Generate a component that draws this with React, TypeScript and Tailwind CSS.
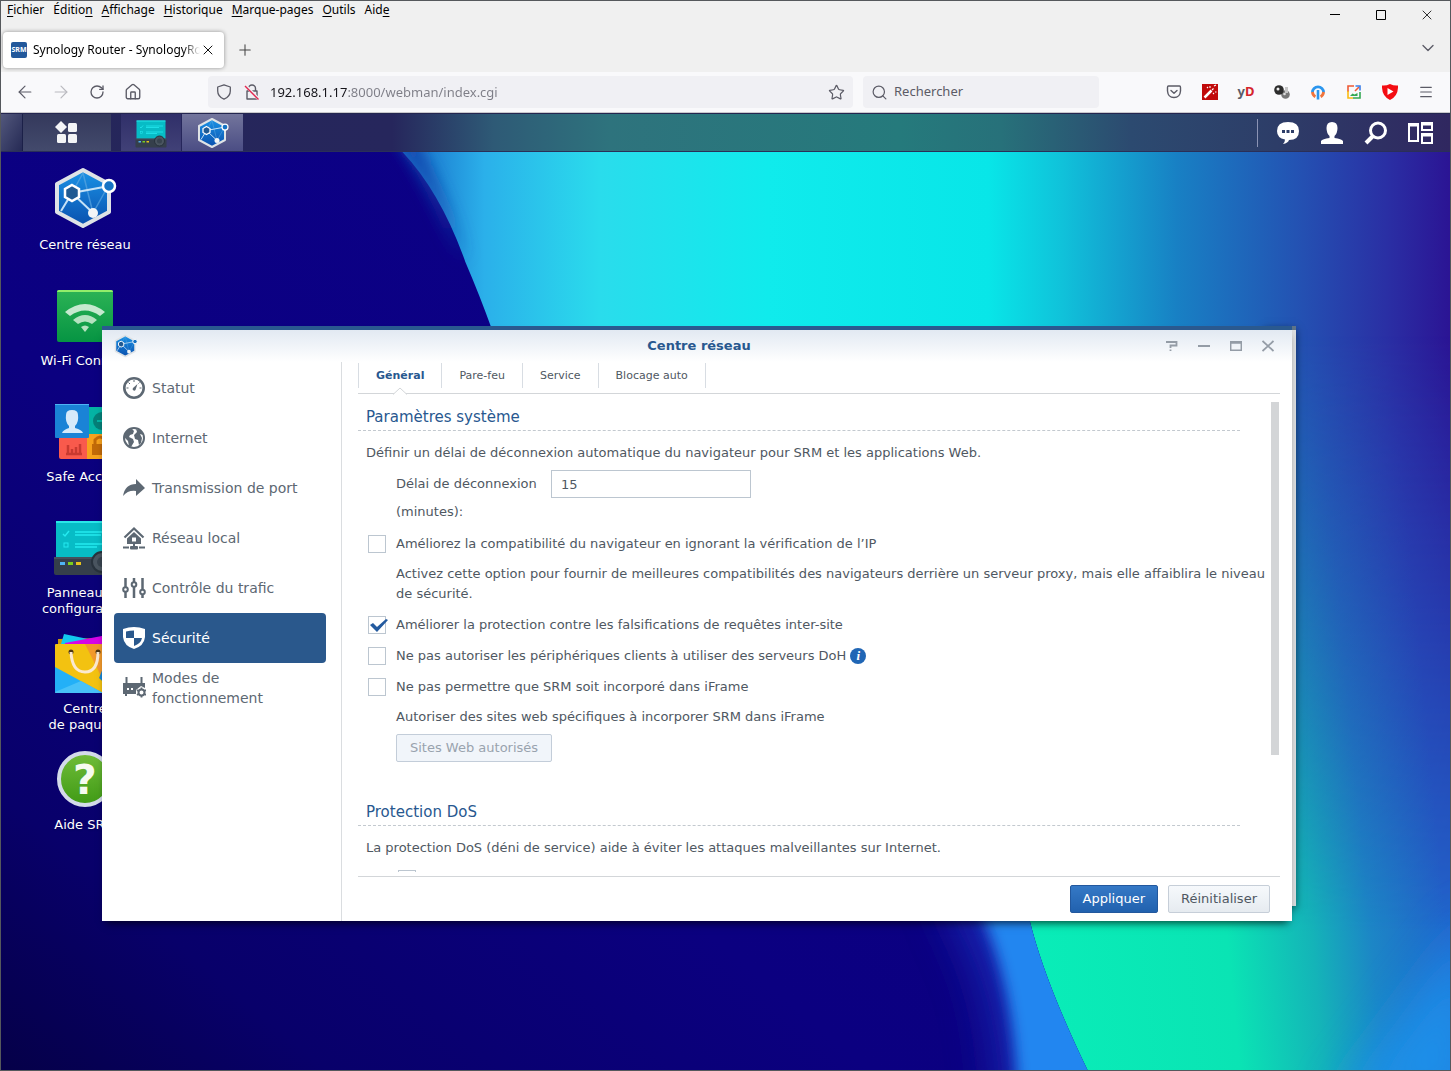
import { useState, type ReactNode } from 'react';
import { ChevronDown, Home, Menu, Plus, RotateCw, Search, Star, X, ArrowLeft, ArrowRight } from 'lucide-react';

/* ---------- Icons ---------- */

function NetworkIcon({ className }: { className?: string }) {
  return (
    <svg viewBox="0 0 64 64" className={className} aria-hidden="true">
      <defs>
        <linearGradient id="hexFill" x1="0" y1="0" x2="0" y2="1">
          <stop offset="0" stopColor="#1a93e6" />
          <stop offset="1" stopColor="#0a50ae" />
        </linearGradient>
      </defs>
      <path d="M30 4 56 18v28L30 60 4 46V18Z" fill="url(#hexFill)" stroke="#dfe3e6" strokeWidth="4" strokeLinejoin="round" />
      <path d="M30 7 40 47 54 22M19 27 30 7" stroke="#5aa5e0" strokeWidth="1.5" fill="none" opacity="0.7" />
      <path d="M8 45 19 27 56 20M19 27 40 47" stroke="#c5e2f7" strokeWidth="2" fill="none" />
      <path d="m19 19 7 4v8l-7 4-7-4v-8Z" fill="#205a92" stroke="#fff" strokeWidth="2.5" />
      <circle cx="56" cy="20" r="6" fill="#1673c4" stroke="#fff" strokeWidth="2.5" />
      <circle cx="40" cy="47" r="5" fill="#f2f5f7" />
    </svg>
  );
}

function WifiIcon() {
  return (
    <svg viewBox="0 0 64 64" className="size-16" aria-hidden="true">
      <defs>
        <linearGradient id="wifiFill" x1="0" y1="0" x2="0" y2="1">
          <stop offset="0" stopColor="#2cb355" />
          <stop offset="1" stopColor="#069443" />
        </linearGradient>
      </defs>
      <rect x="4" y="8" width="56" height="52" rx="2" fill="url(#wifiFill)" />
      <path d="M4 10q0-2 2-2h52q2 0 2 2Z" fill="#92ee6a" />
      <path d="M12 30l5 4q15-11 30 0l5-4Q32 14 12 30Z" fill="#c6e9cf" />
      <path d="M20 38l5 4q7-5 14 0l5-4Q32 28 20 38Z" fill="#b5e2c0" />
      <path d="M28 45q4-3 8 0l-4 5Z" fill="#b5e2c0" />
    </svg>
  );
}

function SafeAccessIcon() {
  return (
    <svg viewBox="0 0 64 64" className="size-16" aria-hidden="true">
      <rect x="36" y="9" width="26" height="27" fill="#04b3a4" />
      <circle cx="49" cy="23" r="9" fill="#057f78" />
      <path d="M44 23h10" stroke="#04b3a4" strokeWidth="2" />
      <path d="M6 40h28v21H8q-2 0-2-2Z" fill="#f95a4c" />
      <path d="M13 56h16M15 56v-9M19 56v-5M23 56v-7M27 56v-10" stroke="#c93a30" strokeWidth="2.5" />
      <rect x="34" y="36" width="28" height="25" fill="#f7a21d" />
      <path d="M42 46v-4q5-6 10 0v4" stroke="#c26a08" strokeWidth="3" fill="none" />
      <rect x="39" y="46" width="16" height="11" fill="#c26a08" />
      <rect x="2" y="6" width="34" height="34" rx="1" fill="#1a83d6" />
      <rect x="2" y="6" width="34" height="1" fill="#4fb3f5" />
      <path d="M13 17q0-5 6-5t6 5q1 7-3 11v2q7 2 8 5H9q1-3 7-5v-2q-4-4-3-11Z" fill="#d5eafa" />
    </svg>
  );
}

function PanelIcon({ className }: { className?: string }) {
  return (
    <svg viewBox="0 0 64 64" className={className} aria-hidden="true">
      <rect x="3" y="7" width="58" height="38" rx="1" fill="#07bcc6" />
      <path d="M3 8h58" stroke="#29e6e8" strokeWidth="2" />
      <path d="m10 20 2 2 4-5M22 18h34M22 21h26M22 30h34M22 33h22" stroke="#25eaf0" strokeWidth="1.5" fill="none" />
      <rect x="11" y="29" width="4" height="4" fill="none" stroke="#25eaf0" />
      <path d="M1 43h62v16q0 2-2 2H3q-2 0-2-2Z" fill="#353f4b" />
      <path d="M1 44h62" stroke="#566270" />
      <rect x="7" y="48" width="5" height="3" fill="#4fb4f4" />
      <rect x="15" y="48" width="5" height="3" fill="#7bcf1c" />
      <rect x="23" y="48" width="5" height="3" fill="#e6c21c" />
      <circle cx="49" cy="48" r="10" fill="#4a5560" stroke="#28323c" strokeWidth="2" />
      <circle cx="49" cy="48" r="5" fill="#38434e" />
    </svg>
  );
}

function PackageIcon() {
  return (
    <svg viewBox="0 0 64 64" className="size-16" aria-hidden="true">
      <path d="M5 14V9l52-1v8Z" fill="#c99a0c" />
      <path d="m8 14 3-10 24 5-5 5Z" fill="#12c9ee" />
      <path d="m12 13 42-8 6 1v8H12Z" fill="#d605e6" />
      <rect x="2" y="14" width="60" height="49" rx="1" fill="#f3c211" />
      <path d="m32 14 20 40 10 6V14Z" fill="#f2992b" />
      <path d="m46 48 9-22 7 10v27Z" fill="#1787d8" />
      <path d="M2 37 50 63H3q-1 0-1-1Z" fill="#23b0f7" />
      <path d="m2 62 26-11 22 12H3Z" fill="#48c2f8" />
      <circle cx="18" cy="22" r="2.5" fill="#4d3512" />
      <circle cx="45" cy="22" r="2.5" fill="#4d3512" />
      <path d="M18 22q1 20 14 20t13-20" stroke="#fbe9d0" strokeWidth="3" fill="none" />
    </svg>
  );
}

function HelpIcon() {
  return (
    <svg viewBox="0 0 64 64" className="size-16" aria-hidden="true">
      <defs>
        <linearGradient id="helpFill" x1="0" y1="0" x2="0" y2="1">
          <stop offset="0" stopColor="#71bd3a" />
          <stop offset="1" stopColor="#3f9a15" />
        </linearGradient>
      </defs>
      <circle cx="32" cy="33" r="26" fill="url(#helpFill)" stroke="#d3dbea" strokeWidth="4" />
      <text x="32" y="48" textAnchor="middle" fontSize="41" fontWeight="700" fontFamily="DejaVu Sans, sans-serif" fill="#f6fbf0">
        ?
      </text>
    </svg>
  );
}

function SideIcon({ children }: { children: ReactNode }) {
  return (
    <svg viewBox="0 0 24 24" className="size-6 shrink-0" fill="none" stroke="currentColor" strokeWidth="2" aria-hidden="true">
      {children}
    </svg>
  );
}

const sideItems: { id: string; label: string; icon: ReactNode }[] = [
  {
    id: 'status',
    label: 'Statut',
    icon: (
      <SideIcon>
        <circle cx="12" cy="12" r="9.7" strokeWidth="2.6" />
        <path d="M12 4v2M4.500 12h2M17.500 12h2M6.500 6.500l1.500 1.500M16.500 7.500l1-1" strokeWidth="1" />
        <path d="m15.500 8-2 6a1.600 1.600 0 1 1-2.500-2Z" fill="currentColor" stroke="none" />
      </SideIcon>
    ),
  },
  {
    id: 'internet',
    label: 'Internet',
    icon: (
      <SideIcon>
        <circle cx="12" cy="12" r="10" />
        <path d="M3 7q4-4 7-4l2 2-1 3-3 1-1 2 4 2 1 3-3 5-2-1-1-5-4-4ZM14 3l5 2 2 4-3-1 2 4-1 5-2 2-1-5-3-1-1-4 3-3Z" fill="currentColor" stroke="none" />
      </SideIcon>
    ),
  },
  {
    id: 'port',
    label: 'Transmission de port',
    icon: (
      <SideIcon>
        <path d="M1 20Q3 8 14 8V3l9 9-9 8v-5q-8-1-13 5Z" fill="currentColor" stroke="none" />
      </SideIcon>
    ),
  },
  {
    id: 'lan',
    label: 'Réseau local',
    icon: (
      <SideIcon>
        <path d="m2.500 11.500 9.500-9 9.500 9" strokeWidth="2.2" />
        <path d="M5 12.500 12 6l7 6.500V18H5Zm5-1v4h4v-4Z" fill="currentColor" fillRule="evenodd" stroke="none" />
        <path d="M1 21.500h6M17 21.500h6M12 18v3" />
        <rect x="8" y="20" width="8" height="3.500" rx="1" fill="currentColor" stroke="none" />
      </SideIcon>
    ),
  },
  {
    id: 'traffic',
    label: 'Contrôle du trafic',
    icon: (
      <SideIcon>
        <path d="M3.500 2v9M3.500 16v6M12 2v4M12 11v11M20.500 2v12M20.500 19v3" strokeWidth="2.5" />
        <circle cx="3.500" cy="13.500" r="2.300" />
        <circle cx="12" cy="8.500" r="2.300" />
        <circle cx="20.500" cy="16" r="2.300" />
      </SideIcon>
    ),
  },
  {
    id: 'security',
    label: 'Sécurité',
    icon: (
      <SideIcon>
        <path d="M1 3q11-4 22 0v8q-1 9-11 12Q2 20 1 11Z" fill="currentColor" stroke="none" />
        <path d="M4 5.500q4-1 8-1V12H4ZM12 12h8q-1 5.500-8 8Z" fill="#2a588c" stroke="none" />
      </SideIcon>
    ),
  },
  {
    id: 'modes',
    label: 'Modes de fonctionnement',
    icon: (
      <SideIcon>
        <path d="M4.500 1v7M19.500 1v7" />
        <path d="M1 7h22v5l-4-2-5 4v4H5v2H3v-2H1Z" fill="currentColor" stroke="none" />
        <path d="M5 13h2M9 13h2" stroke="#fff" />
        <circle cx="19.500" cy="16.500" r="3" strokeWidth="2" />
        <path d="M19.500 11.500v2M19.500 19.500v2M15 14l1.500 1M22.500 18l1.500 1M15 19l1.500-1M22.500 15l1.500-1" strokeWidth="1.800" />
      </SideIcon>
    ),
  },
];

/* ---------- Browser chrome ---------- */

const menus = [
  ['', 'F', 'ichier'],
  ['Éditio', 'n', ''],
  ['', 'A', 'ffichage'],
  ['', 'H', 'istorique'],
  ['', 'M', 'arque-pages'],
  ['', 'O', 'utils'],
  ['Aid', 'e', ''],
];

const iconButton = 'flex h-8 w-9 items-center justify-center text-[#5b5b66]';

function BrowserChrome() {
  return (
    <header className="font-['Noto_Sans','Open_Sans',sans-serif] text-xs text-black">
      <div className="flex h-[27px] justify-between">
        <nav className="flex h-[18px] items-center gap-[9px] pl-[6px]" aria-label="Menu">
          {menus.map(([before, key, after]) => (
            <button key={before + key + after} className="leading-4">
              {before}
              <span className="underline underline-offset-2">{key}</span>
              {after}
            </button>
          ))}
        </nav>
        <div className="flex items-center">
          <button aria-label="Réduire" className="flex w-[46px] justify-center">
            <svg viewBox="0 0 12 12" className="size-3" stroke="currentColor">
              <path d="M1 5.500h10" />
            </svg>
          </button>
          <button aria-label="Agrandir" className="flex w-[46px] justify-center">
            <svg viewBox="0 0 12 12" className="size-3" fill="none" stroke="currentColor">
              <path d="M1.500 1.500h9v9h-9Z" />
            </svg>
          </button>
          <button aria-label="Fermer" className="flex w-[46px] justify-center">
            <X className="size-4" strokeWidth={1.2} />
          </button>
        </div>
      </div>

      <div className="flex h-11 items-center justify-between pr-3 pb-1 pl-[2px]">
        <div className="flex items-center gap-3">
          <div className="mt-1 flex h-9 w-[221px] items-center rounded bg-white px-2 shadow-[0_0_4px_rgba(0,0,0,0.4)]">
            <span className="flex size-4 shrink-0 items-center justify-center rounded-xs bg-[#22589b] text-[7px] font-bold text-white">SRM</span>
            <span className="ml-[6px] flex-1 overflow-hidden mask-r-from-90% mask-r-to-100% leading-5 whitespace-nowrap">Synology Router - SynologyRouter</span>
            <button aria-label="Fermer l’onglet" className="shrink-0">
              <X className="size-4" strokeWidth={1.4} />
            </button>
          </div>
          <button aria-label="Nouvel onglet" className="mt-1 text-[#444]">
            <Plus className="size-[18px]" strokeWidth={1.4} />
          </button>
        </div>
        <button aria-label="Lister les onglets" className="text-[#5b5b66]">
          <ChevronDown className="size-5" strokeWidth={1.6} />
        </button>
      </div>

      <div className="flex h-[41px] items-center border-b border-[#c8c8cc] bg-[#f9f9fb] px-[6px]">
        <button aria-label="Page précédente" className={iconButton}>
          <ArrowLeft className="size-5" strokeWidth={1.4} />
        </button>
        <button aria-label="Page suivante" className={`${iconButton} opacity-40`}>
          <ArrowRight className="size-5" strokeWidth={1.4} />
        </button>
        <button aria-label="Actualiser" className={iconButton}>
          <RotateCw className="size-4" strokeWidth={2} />
        </button>
        <button aria-label="Accueil" className={iconButton}>
          <Home className="size-[18px]" strokeWidth={1.8} />
        </button>

        <div className="ml-[57px] flex h-8 flex-1 items-center rounded bg-[#f0f0f4] px-2 text-[#5b5b66]">
          <svg viewBox="0 0 16 16" className="size-4 shrink-0" fill="none" stroke="currentColor" strokeWidth="1.3" aria-hidden="true">
            <path d="M8 .8 14.300 3v4q0 5.500-6.300 8.200Q1.700 12.500 1.700 7V3Z" strokeLinejoin="round" />
          </svg>
          <svg viewBox="0 0 16 16" className="ml-3 size-4 shrink-0" fill="none" stroke="currentColor" strokeWidth="1.400" aria-hidden="true">
            <path d="M4.500 7V4.500a3.500 3.500 0 0 1 7 0V7M3 7h10v8H3Z" strokeLinejoin="round" />
            <path d="m1.500 1.500 13 13.500" stroke="#f0f0f4" strokeWidth="3" />
            <path d="m1 2 13.500 13.500" stroke="#e22850" />
          </svg>
          {/* host part is darker than the port and path */}
          <input
            aria-label="Adresse"
            type="text"
            defaultValue="192.168.1.17:8000/webman/index.cgi"
            className="ml-[10px] min-w-0 flex-1 bg-[linear-gradient(90deg,#15141a_78px,#7d7d86_78px)] bg-clip-text text-[13px] leading-6 text-transparent outline-none"
          />
          <button aria-label="Marquer cette page">
            <Star className="size-[17px]" strokeWidth={1.7} />
          </button>
        </div>

        <div className="mr-[57px] ml-[10px] flex h-8 w-[236px] items-center gap-[6px] rounded bg-[#f0f0f4] px-2 text-[#5b5b66]">
          <Search className="size-[17px] shrink-0" strokeWidth={1.7} />
          <input aria-label="Rechercher" placeholder="Rechercher" className="w-full bg-transparent text-[13px] placeholder-[#5b5b66] outline-none" />
        </div>

        <button aria-label="Pocket" className={iconButton}>
          <svg viewBox="0 0 16 16" className="size-4" fill="none" stroke="currentColor" strokeWidth="1.400" strokeLinecap="round" strokeLinejoin="round">
            <path d="M2.500 2h11q1 0 1 1.500V7q-.5 6.500-6.500 6.500T1.500 7V3.500Q1.500 2 2.500 2Z" />
            <path d="M5 6.500 8 9.300l3-2.800" />
          </svg>
        </button>
        <button aria-label="Baguette" className={iconButton}>
          <svg viewBox="0 0 16 16" className="size-4">
            <rect width="16" height="16" fill="#c10a0a" />
            <path d="m2.500 13.500 7-7" stroke="#fff" strokeWidth="2.500" />
            <path d="m10 6 1.500-1.500M8 2v2M5 3l1 1M13 8h1.500M12 2l2-1M11 9l1 1" stroke="#fff" strokeWidth="1.100" />
          </svg>
        </button>
        <button aria-label="yD" className={`${iconButton} text-[13px] font-bold`}>
          y<span className="text-[#d5242c]">D</span>
        </button>
        <button aria-label="Sphères" className={iconButton}>
          <svg viewBox="0 0 16 16" className="size-4">
            <circle cx="11.500" cy="10.500" r="4.300" fill="#777" />
            <path d="M11 3h3v6h-3Z" fill="#c6c6c6" />
            <circle cx="5" cy="6" r="4.800" fill="#2c2c2c" />
            <circle cx="4" cy="5" r="1.500" fill="#eee" />
            <circle cx="10.500" cy="10" r="1.300" fill="#ddd" />
          </svg>
        </button>
        <button aria-label="Mot de passe" className={iconButton}>
          <svg viewBox="0 0 16 16" className="size-4" fill="none" strokeWidth="2.800">
            <path d="M2.400 8.500A5.600 5.600 0 1 1 13.600 8.500" stroke="#2b96ee" />
            <path d="M2.400 8q.5 3.500 3 4.800M13.600 8q-.5 3.500-3 4.800" stroke="#f0743c" />
            <path d="M8 6v9.500" stroke="#2b96ee" strokeWidth="2.600" />
          </svg>
        </button>
        <button aria-label="Capture" className={iconButton}>
          <svg viewBox="0 0 16 16" className="size-4" fill="none" strokeWidth="1.600">
            <path d="M2 8V2h6" stroke="#ee5a35" />
            <path d="M2 7v7h5" stroke="#fbbc14" />
            <path d="M7 14h7V8" stroke="#34a853" />
            <path d="m9 7 4-4" stroke="#ee5a35" />
            <path d="M9.500 2H14v4.500" stroke="#3b7fe8" />
            <path d="m4 12 2.500-2.500 2 1 3-1.500v3Z" fill="#34a853" />
          </svg>
        </button>
        <button aria-label="Bloqueur vidéo" className={iconButton}>
          <svg viewBox="0 0 16 16" className="size-4">
            <path d="M8 0q4 2 8 1.500.5 10.500-8 14.500Q-.5 12 0 1.500 4 2 8 0Z" fill="#f40d12" />
            <path d="m5.500 4 6 3.500-6 3.500Z" fill="#fff" />
          </svg>
        </button>
        <button aria-label="Menu de l’application" className={iconButton}>
          <Menu className="size-4" strokeWidth={1.7} />
        </button>
      </div>
    </header>
  );
}

/* ---------- SRM desktop ---------- */

function Taskbar() {
  const trayButton = 'flex w-11 items-center justify-center';
  return (
    <div className="relative z-10 flex h-[39px] items-stretch border-t border-b border-t-[#242650] border-b-[#2a2f58] bg-[linear-gradient(90deg,#25265a_0%,#26265c_27%,#2e5a76_34%,#2e737d_42%,#257a7c_62%,#27717a_69%,#2c4a70_78%,#2d3d68_88%,#302760_100%)] text-white">
      <div className="w-[22px] border-r border-[#1b2048] bg-linear-to-br from-[#53587c] to-[#262a55]" />
      <button aria-label="Menu principal" className="flex w-[88px] items-center justify-center bg-linear-to-b from-[#34395c] to-[#434a6c]">
        <svg viewBox="0 0 24 24" className="size-6" fill="#f3f4f6">
          <path d="m6 0 6 6-6 6-6-6Z" />
          <rect x="13" y="2" width="9" height="9" rx="1.500" />
          <rect x="2" y="13" width="9" height="9" rx="1.500" />
          <rect x="13" y="13" width="9" height="9" rx="1.500" />
        </svg>
      </button>
      <button aria-label="Panneau de configuration" className="ml-[10px] flex w-[60px] items-center justify-center bg-linear-to-b from-[#302f69] to-[#414177]">
        <PanelIcon className="size-8" />
      </button>
      <button aria-label="Centre réseau" className="ml-px flex w-[61px] items-center justify-center bg-linear-to-b from-[#73759c] to-[#4b4d84]">
        <NetworkIcon className="size-8" />
      </button>
      <div className="ml-auto flex items-center pr-2">
        <div className="mr-2 h-7 w-px bg-[#8b93b4]" />
        <button aria-label="Notifications" className={trayButton}>
          <svg viewBox="0 0 24 24" className="size-6">
            <path d="M12 1q11 0 11 9t-10 9q-1 3-6 4 2-2 2-4.500Q1 17 1 10q0-9 11-9Z" fill="#fff" />
            <path d="M6 9h3v3H6ZM10.500 9h3v3h-3ZM15 9h3v3h-3Z" fill="#2d3d68" />
          </svg>
        </button>
        <button aria-label="Utilisateur" className={trayButton}>
          <svg viewBox="0 0 24 24" className="size-6" fill="#fff">
            <path d="M6.500 7q0-6 5.500-6t5.500 6q0 5-3 8v2q7 1 8.500 3v3H1v-3q1.500-2 8.500-3v-2q-3-3-3-8Z" />
          </svg>
        </button>
        <button aria-label="Recherche" className={trayButton}>
          <svg viewBox="0 0 24 24" className="size-6" fill="none" stroke="#fff">
            <circle cx="14" cy="9.500" r="7.500" strokeWidth="3" />
            <path d="m2 22 7-7" strokeWidth="4" />
          </svg>
        </button>
        <button aria-label="Widgets" className={trayButton}>
          <svg viewBox="0 0 26 24" className="h-6 w-[26px]" fill="none" stroke="#fff" strokeWidth="2">
            <path d="M2 3h9v17H2ZM15 2h10v7H15ZM15 13h10v9H15Z" />
            <path d="M2 4h9M15 3h10M15 14h10" strokeWidth="3" />
          </svg>
        </button>
      </div>
    </div>
  );
}

function Wallpaper() {
  return (
    <svg viewBox="0 0 1451 919" preserveAspectRatio="none" className="absolute inset-0 size-full" aria-hidden="true">
      <defs>
        <linearGradient id="sky" gradientUnits="userSpaceOnUse" x1="400" y1="0" x2="1451" y2="0">
          <stop offset="0" stopColor="#1668c6" />
          <stop offset="0.080" stopColor="#2bb0ea" />
          <stop offset="0.190" stopColor="#2adcec" />
          <stop offset="0.350" stopColor="#10ebec" />
          <stop offset="0.560" stopColor="#08e6e8" />
          <stop offset="0.630" stopColor="#10c2da" />
          <stop offset="0.740" stopColor="#1880c4" />
          <stop offset="0.860" stopColor="#2450b2" />
          <stop offset="0.940" stopColor="#2a2fa4" />
          <stop offset="1" stopColor="#2b1494" />
        </linearGradient>
        <linearGradient id="lagoon" gradientUnits="userSpaceOnUse" x1="1030" y1="850" x2="1451" y2="810">
          <stop offset="0" stopColor="#09edb8" />
          <stop offset="0.480" stopColor="#0ae4b4" />
          <stop offset="0.680" stopColor="#14b4b8" />
          <stop offset="0.820" stopColor="#1c86c6" />
          <stop offset="1" stopColor="#2264ca" />
        </linearGradient>
        <linearGradient id="fadeDown" x1="0" y1="0" x2="0" y2="1">
          <stop offset="0.200" stopColor="#000" />
          <stop offset="0.850" stopColor="#fff" />
        </linearGradient>
        <mask id="lower">
          <rect width="1451" height="919" fill="url(#fadeDown)" />
        </mask>
        <linearGradient id="night" x1="1" y1="0" x2="0" y2="1">
          <stop offset="0" stopColor="#0d018c" />
          <stop offset="0.600" stopColor="#0b0080" />
          <stop offset="0.850" stopColor="#08006a" />
          <stop offset="1" stopColor="#050048" />
        </linearGradient>
        <linearGradient id="rim" gradientUnits="userSpaceOnUse" x1="0" y1="0" x2="0" y2="110">
          <stop offset="0" stopColor="#1348ae" />
          <stop offset="1" stopColor="#1348ae" stopOpacity="0" />
        </linearGradient>
        <clipPath id="nightEdge">
          <path d="M0 0H600L1030 769Q1045 830 1088 919H0Z" />
        </clipPath>
        <filter id="soft" x="-50%" y="-20%" width="200%" height="140%">
          <feGaussianBlur stdDeviation="7" />
        </filter>
        <filter id="softer" x="-50%" y="-50%" width="200%" height="200%">
          <feGaussianBlur stdDeviation="24" />
        </filter>
      </defs>
      <rect width="1451" height="919" fill="url(#sky)" />
      <rect width="1451" height="919" fill="url(#lagoon)" mask="url(#lower)" />
      <path d="M1330 960 1480 760v200Z" fill="#1c92ec" filter="url(#softer)" opacity="0.900" />
      <path d="M0 0H402Q440 40 465 110 480 145 491 176L700 500 1030 769Q1045 830 1088 919H0Z" fill="url(#night)" />
      <g clipPath="url(#nightEdge)">
        <path d="M930 700 1030 700 1100 960H1000Q1000 850 960 780Z" fill="#1a30c0" filter="url(#softer)" opacity="0.800" />
        <path d="M960 700H1060L1110 960H1018Q1018 850 985 770Z" fill="#2186f0" filter="url(#soft)" />
        <path d="M400-20Q436 30 465 115" stroke="url(#rim)" strokeWidth="16" fill="none" filter="url(#soft)" />
      </g>
    </svg>
  );
}

const shortcuts: { lines: string[]; icon: ReactNode }[] = [
  { lines: ['Centre réseau'], icon: <NetworkIcon className="size-16" /> },
  { lines: ['Wi-Fi Connect'], icon: <WifiIcon /> },
  { lines: ['Safe Access'], icon: <SafeAccessIcon /> },
  { lines: ['Panneau de', 'configuration'], icon: <PanelIcon className="size-16" /> },
  { lines: ['Centre', 'de paquets'], icon: <PackageIcon /> },
  { lines: ['Aide SRM'], icon: <HelpIcon /> },
];

/* ---------- Network center window ---------- */

interface CheckRowProps {
  id: string;
  label: string;
  checked?: boolean;
  children?: ReactNode;
}

function CheckRow({ id, label, checked = false, children }: CheckRowProps) {
  return (
    <div className="flex h-[31px] items-center pl-[10px]">
      <span className="relative size-[18px]">
        <input id={id} type="checkbox" defaultChecked={checked} className="peer block size-[18px] appearance-none border border-[#bcc6d0] bg-white" />
        <svg viewBox="0 0 20 18" className="pointer-events-none absolute top-0 left-px hidden h-[18px] w-5 peer-checked:block" fill="#235a9f" aria-hidden="true">
          <path d="m1 9 3-2 4 4 9-8 2 1L8 16Z" />
        </svg>
      </span>
      <label htmlFor={id} className="ml-[10px]">
        {label}
      </label>
      {children}
    </div>
  );
}

function SectionTitle({ children }: { children: ReactNode }) {
  return <h2 className="h-[25px] border-b border-dashed border-[#c3c9cf] pl-2 text-[15px] leading-[22px] text-[#28588f]">{children}</h2>;
}

const tabs = ['Général', 'Pare-feu', 'Service', 'Blocage auto'];

function NetworkWindow() {
  const [section, setSection] = useState('security');
  const [tab, setTab] = useState('Général');

  return (
    <section className="absolute top-[174px] right-[158px] left-[101px] flex h-[595px] flex-col border-t-4 border-[#2a598f] bg-white text-[13px] text-[#4f5862] shadow-[0_6px_8px_-4px_rgba(0,0,0,0.7)]">
      <div className="grid h-8 shrink-0 grid-cols-3 items-center bg-linear-to-b from-[#e2e9f2] to-white pr-2 pl-3">
        <NetworkIcon className="size-6" />
        <h1 className="text-center font-bold text-[#28588f]">Centre réseau</h1>
        <div className="flex justify-end text-[#949ca6]">
          <button aria-label="Aide" className="flex w-8 justify-center">
            <svg viewBox="0 0 12 12" className="size-3" fill="none" stroke="currentColor" strokeWidth="1.800">
              <path d="M0 2h10.500v3.500H4.500V8M4.500 9.500V11" />
            </svg>
          </button>
          <button aria-label="Réduire la fenêtre" className="flex w-8 justify-center">
            <svg viewBox="0 0 12 12" className="size-3" stroke="currentColor" strokeWidth="2">
              <path d="M0 6h12" />
            </svg>
          </button>
          <button aria-label="Agrandir la fenêtre" className="flex w-8 justify-center">
            <svg viewBox="0 0 12 12" className="size-3" fill="none" stroke="currentColor" strokeWidth="1.500">
              <path d="M.7 1.700h10.600v8.600H.7ZM0 3h12" />
            </svg>
          </button>
          <button aria-label="Fermer la fenêtre" className="flex w-8 justify-center">
            <svg viewBox="0 0 12 12" className="size-3" stroke="currentColor" strokeWidth="1.800">
              <path d="m.5 1 11 10M11.500 1l-11 10" />
            </svg>
          </button>
        </div>
      </div>

      <div className="flex min-h-0 flex-1">
        <nav className="w-60 shrink-0 border-r border-[#dadde0] pt-px pr-[15px] pl-3">
          {sideItems.map((item) => (
            <button
              key={item.id}
              onClick={() => setSection(item.id)}
              className={`flex h-[50px] w-full items-center gap-[6px] rounded-sm px-2 text-left text-[14px] leading-5 ${
                section === item.id ? 'bg-[#2a588c] text-white' : 'text-[#5d6873]'
              }`}
            >
              {item.icon}
              {item.label}
            </button>
          ))}
        </nav>

        <div className="flex min-w-0 flex-1 flex-col pr-3 pl-4">
          <div className="flex h-8 shrink-0 border-b border-[#d3d6d9] pt-px" role="tablist">
            {tabs.map((name) => (
              <button
                key={name}
                role="tab"
                aria-selected={tab === name}
                onClick={() => setTab(name)}
                className={`relative h-[25px] border-r border-[#d8dde3] px-[17px] pt-0.5 text-[11px] first:border-l ${tab === name ? 'font-bold text-[#28588f]' : ''}`}
              >
                {name}
                {tab === name && (
                  <svg viewBox="0 0 14 8" className="absolute top-6 left-1/2 h-2 w-[14px] -translate-x-1/2" fill="#fff" stroke="#d3d6d9" aria-hidden="true">
                    <path d="M0 7.500 7 1l7 6.500" />
                  </svg>
                )}
              </button>
            ))}
          </div>

          <div className="mb-1 flex min-h-0 flex-1">
            <div className="min-w-0 flex-1 overflow-hidden pt-3 pr-[31px] leading-5">
              <SectionTitle>Paramètres système</SectionTitle>
              <p className="mt-3 pl-2">Définir un délai de déconnexion automatique du navigateur pour SRM et les applications Web.</p>
              <div className="mt-[7px] mb-0.5 flex pl-[38px]">
                <label htmlFor="timeout" className="w-[155px] pr-3 leading-7">
                  Délai de déconnexion (minutes):
                </label>
                <input id="timeout" type="text" defaultValue="15" className="h-7 w-[200px] border border-[#bcc6d0] bg-white px-[9px] outline-none" />
              </div>
              <CheckRow id="ip" label="Améliorez la compatibilité du navigateur en ignorant la vérification de l’IP" />
              <p className="-mr-7 py-[5px] pl-[38px]">
                Activez cette option pour fournir de meilleures compatibilités des navigateurs derrière un serveur proxy, mais elle affaiblira le niveau de sécurité.
              </p>
              <CheckRow id="csrf" label="Améliorer la protection contre les falsifications de requêtes inter-site" checked />
              <CheckRow id="doh" label="Ne pas autoriser les périphériques clients à utiliser des serveurs DoH">
                <span className="ml-1 flex size-4 items-center justify-center rounded-full bg-[#2066b5] font-['Liberation_Serif',serif] text-[13px] font-bold text-white italic">
                  i
                </span>
              </CheckRow>
              <CheckRow id="iframe" label="Ne pas permettre que SRM soit incorporé dans iFrame" />
              <p className="h-8 pt-[5px] pl-[38px]">Autoriser des sites web spécifiques à incorporer SRM dans iFrame</p>
              <button disabled className="ml-[38px] block h-7 rounded-xs border border-[#c3cdd9] bg-[#f1f5fa] px-[13px] text-[#99a3ae]">
                Sites Web autorisés
              </button>
              <div className="pt-[39px]">
                <SectionTitle>Protection DoS</SectionTitle>
              </div>
              <p className="mt-3 mb-3 pl-2">La protection DoS (déni de service) aide à éviter les attaques malveillantes sur Internet.</p>
              <input type="checkbox" aria-label="Activer la protection DoS" className="ml-10 block size-[18px] appearance-none border border-[#bcc6d0]" />
            </div>
            <div className="mt-2 mr-px h-[353px] w-2 bg-[#d3d5d7]" />
          </div>

          <div className="flex h-[45px] shrink-0 items-center justify-end gap-[10px] border-t border-[#d3d6d9] pr-[10px]">
            <button className="h-7 rounded-xs border border-[#22589e] bg-linear-to-b from-[#3579c6] to-[#2161ae] px-3 text-white">Appliquer</button>
            <button className="h-7 rounded-xs border border-[#c6ced8] bg-linear-to-b from-[#f6f9fc] to-[#e6ebf0] px-3">Réinitialiser</button>
          </div>
        </div>
      </div>
    </section>
  );
}

export default function App() {
  return (
    <div className="flex min-h-screen flex-col overflow-hidden border border-[#55585c] bg-[#f0f0f0]">
      <BrowserChrome />
      <div className="flex flex-1 flex-col font-['DejaVu_Sans',Verdana,sans-serif]">
        <Taskbar />
        <main className="relative flex-1 overflow-hidden bg-[#0c0084]">
          <Wallpaper />
          <ul className="relative ml-5 flex w-32 flex-col pt-[14px] text-[13px] leading-4 text-white">
            {shortcuts.map((s) => (
              <li key={s.lines.join(' ')} className="h-[116px]">
                <button className="flex w-full flex-col items-center">
                  {s.icon}
                  <span className="mt-[7px] flex flex-col text-shadow-sm">
                    {s.lines.map((line) => (
                      <span key={line}>{line}</span>
                    ))}
                  </span>
                </button>
              </li>
            ))}
          </ul>
          {/* second window peeking out behind the active one */}
          <div className="absolute top-[174px] right-[154px] h-[580px] w-8 border-t-4 border-[#5f7488] bg-[#dcdedf] shadow-[0_3px_8px_rgba(0,0,0,0.5)]" />
          <NetworkWindow />
        </main>
      </div>
    </div>
  );
}
